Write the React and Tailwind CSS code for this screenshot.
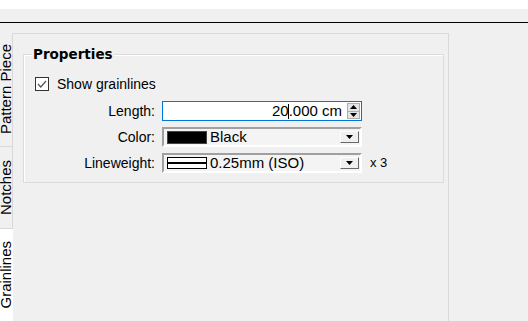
const tabs = [
  { label: "Pattern Piece", h: "h-[114px]", active: false },
  { label: "Notches", h: "h-[82px]", active: false },
  { label: "Grainlines", h: "flex-1", active: true },
];

function Tab({ label, h, active }) {
  return (
    <div
      className={`${h} overflow-hidden flex items-center justify-end ${
        active ? "bg-white pr-[1px]" : "border-r border-b border-[#d9d9d9]"
      }`}
    >
      <span className="[writing-mode:vertical-rl] rotate-180 leading-none text-[15px] whitespace-nowrap -mr-px">
        {label}
      </span>
    </div>
  );
}

function Checkbox() {
  return (
    <span className="w-[14px] h-[14px] border border-[#333] bg-white flex items-center justify-center">
      <svg width="10" height="8" viewBox="0 0 10 8">
        <path d="M1 4 L3.8 7 L9 1" fill="none" stroke="#555" strokeWidth="1.2" />
      </svg>
    </span>
  );
}

function DropButton() {
  return (
    <span className="w-[19px] h-[12px] border border-t-white border-l-white border-b-[#696969] border-r-[#696969] bg-[#f0f0f0] flex items-center justify-center">
      <svg width="7" height="4" viewBox="0 0 7 4">
        <path d="M0 0 H7 L3.5 4 Z" fill="#000" />
      </svg>
    </span>
  );
}

function Combo({ children }) {
  return (
    <div className="w-[200px] h-[20px] border-2 border-t-[#a0a0a0] border-l-[#a0a0a0] border-b-white border-r-white bg-[#f4f4f4] flex items-center pl-[3px] pr-[1px]">
      {children}
      <span className="ml-auto">
        <DropButton />
      </span>
    </div>
  );
}

function Row({ label, children }) {
  return (
    <div className="flex items-center h-[20px]">
      <span className="w-[131px] text-right text-[14px]">{label}</span>
      <span className="ml-[7px] flex items-center">{children}</span>
    </div>
  );
}

export default function App() {
  return (
    <div className="w-[528px] h-[321px] bg-[#f0f0f0] overflow-hidden flex flex-col text-black [font-family:'Liberation_Sans',Arial,sans-serif]">
      <div className="h-[9px] bg-white" />
      <div className="h-[13px]" />
      <div className="h-px bg-black" />
      <div className="h-[10px]" />

      <div className="flex flex-1">
        {/* side tabs */}
        <div className="w-[13px] flex flex-col">
          {tabs.map((t) => (
            <Tab key={t.label} {...t} />
          ))}
        </div>

        {/* tab page */}
        <div className="w-[436px] border-t border-r border-[#d9d9d9] pt-[20px] pl-[10px]">
          <div className="relative w-[421px] h-[129px] border border-[#dcdcdc] shadow-[inset_1px_1px_0_#fff] pt-[19px]">
            <span className="absolute left-[8px] top-[-10px] px-[1px] bg-[#f0f0f0] text-[13.5px] font-bold leading-[18px] [font-family:'DejaVu_Sans',sans-serif]">
              Properties
            </span>

            <div className="flex items-center h-[20px] pl-[11px] gap-[8px]">
              <Checkbox />
              <span className="text-[14px]">Show grainlines</span>
            </div>

            <div className="mt-[7px] flex flex-col gap-[6px]">
              <Row label="Length:">
                <div className="w-[200px] h-[20px] border border-[#0078d7] bg-white flex items-center pr-[1px]">
                  <span className="flex-1 text-right text-[15px] pr-[5px] leading-none">
                    20<span className="inline-block w-px h-[15px] bg-black align-middle -mx-[0.5px]" />.000 cm
                  </span>
                  <span className="flex flex-col w-[13px] h-[16px] border border-[#adadad] bg-[#e5e5e5]">
                    <span className="flex-1 flex items-center justify-center border-b border-[#adadad]">
                      <svg width="7" height="4" viewBox="0 0 7 4">
                        <path d="M0 4 H7 L3.5 0 Z" fill="#000" />
                      </svg>
                    </span>
                    <span className="flex-1 flex items-center justify-center">
                      <svg width="7" height="4" viewBox="0 0 7 4">
                        <path d="M0 0 H7 L3.5 4 Z" fill="#000" />
                      </svg>
                    </span>
                  </span>
                </div>
              </Row>

              <Row label="Color:">
                <Combo>
                  <span className="w-[40px] h-[13px] bg-black border border-[#444]" />
                  <span className="ml-[3px] text-[15px]">Black</span>
                </Combo>
              </Row>

              <Row label="Lineweight:">
                <Combo>
                  <span className="w-[40px] h-[12px] border border-black bg-white flex items-center">
                    <span className="w-full h-[2px] bg-black" />
                  </span>
                  <span className="ml-[3px] text-[15px]">0.25mm (ISO)</span>
                </Combo>
                <span className="ml-[8px] text-[13px]">x 3</span>
              </Row>
            </div>
          </div>
        </div>
      </div>
    </div>
  );
}
